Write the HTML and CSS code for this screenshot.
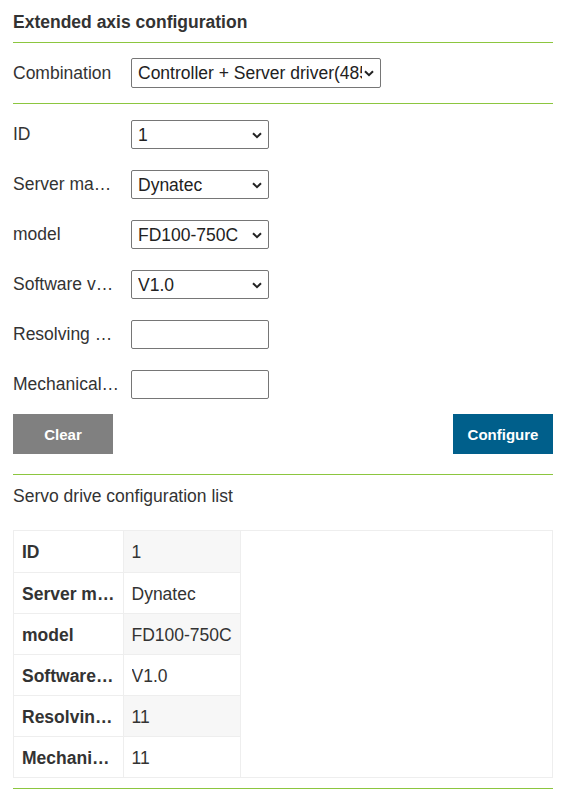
FILE: index.html
```html
<!DOCTYPE html>
<html>
<head>
<meta charset="utf-8">
<link rel="stylesheet" href="styles.css">
</head>
<body>
<div class="page">
  <div class="title">Extended axis configuration</div>
  <div class="combo">
    <span class="combo-label">Combination</span>
    <span class="sel-wrap sel-wrap-wide">
      <select class="sel sel-wide"><option>Controller + Server driver(485)</option></select>
      <svg class="chev" width="10" height="7" viewBox="0 0 10 7"><path d="M1 1.2 L5 5.2 L9 1.2" fill="none" stroke="#222" stroke-width="2"/></svg>
    </span>
  </div>
  <div class="form">
    <div class="row"><span class="lbl">ID</span>
      <span class="sel-wrap"><select class="sel"><option>1</option></select>
      <svg class="chev" width="10" height="7" viewBox="0 0 10 7"><path d="M1 1.2 L5 5.2 L9 1.2" fill="none" stroke="#222" stroke-width="2"/></svg></span></div>
    <div class="row"><span class="lbl">Server manufacturer</span>
      <span class="sel-wrap"><select class="sel"><option>Dynatec</option></select>
      <svg class="chev" width="10" height="7" viewBox="0 0 10 7"><path d="M1 1.2 L5 5.2 L9 1.2" fill="none" stroke="#222" stroke-width="2"/></svg></span></div>
    <div class="row"><span class="lbl">model</span>
      <span class="sel-wrap"><select class="sel"><option>FD100-750C</option></select>
      <svg class="chev" width="10" height="7" viewBox="0 0 10 7"><path d="M1 1.2 L5 5.2 L9 1.2" fill="none" stroke="#222" stroke-width="2"/></svg></span></div>
    <div class="row"><span class="lbl">Software version</span>
      <span class="sel-wrap"><select class="sel"><option>V1.0</option></select>
      <svg class="chev" width="10" height="7" viewBox="0 0 10 7"><path d="M1 1.2 L5 5.2 L9 1.2" fill="none" stroke="#222" stroke-width="2"/></svg></span></div>
    <div class="row"><span class="lbl">Resolving power</span><input class="inp" type="text"></div>
    <div class="row"><span class="lbl">Mechanical ratio</span><input class="inp" type="text"></div>
  </div>
  <div class="actions">
    <button class="btn btn-clear">Clear</button>
    <button class="btn btn-conf">Configure</button>
  </div>
  <div class="list-title">Servo drive configuration list</div>
  <div class="table-box">
    <table class="tbl">
      <tr><th><span class="cell">ID</span></th><td class="shade"><span class="cell">1</span></td></tr>
      <tr><th><span class="cell">Server manufacturer</span></th><td><span class="cell">Dynatec</span></td></tr>
      <tr><th><span class="cell">model</span></th><td class="shade"><span class="cell">FD100-750C</span></td></tr>
      <tr><th><span class="cell">Software version</span></th><td><span class="cell">V1.0</span></td></tr>
      <tr><th><span class="cell">Resolving power</span></th><td class="shade"><span class="cell">11</span></td></tr>
      <tr><th><span class="cell">Mechanical ratio</span></th><td><span class="cell">11</span></td></tr>
    </table>
  </div>
  <div class="end-line"></div>
</div>
</body>
</html>
```

FILE: styles.css
```css
html, body {
  margin: 0;
  padding: 0;
  background: #fff;
}
body {
  font-family: "Liberation Sans", Arial, sans-serif;
  font-size: 17.5px;
  color: #333;
}
.page {
  padding: 0 11px 0 13px;
}
.title {
  padding: 12px 0 10px;
  line-height: 20px;
  font-weight: bold;
  border-bottom: 1px solid #8cc63f;
}
.combo {
  display: flex;
  align-items: center;
  padding: 15px 0 15px;
  border-bottom: 1px solid #8cc63f;
}
.combo-label {
  width: 118px;
}
.sel-wrap {
  position: relative;
  display: inline-flex;
}
.chev {
  position: absolute;
  right: 7px;
  top: 50%;
  margin-top: -3px;
  pointer-events: none;
}
.sel, .inp {
  font-family: "Liberation Sans", Arial, sans-serif;
  font-size: 17.5px;
  color: #222;
  width: 138px;
  height: 29px;
  box-sizing: border-box;
  margin: 0;
  border: 1px solid #767676;
  border-radius: 2px;
  background: #fff;
}
.sel {
  -webkit-appearance: none;
  appearance: none;
  padding: 0 20px 0 6px;
}
.inp {
  padding: 0 6px;
}
.sel-wide {
  width: 250px;
  height: 30px;
  padding-right: 18px;
}
.form {
  display: flex;
  flex-direction: column;
  gap: 21px;
  padding-top: 16px;
}
.row {
  display: flex;
  align-items: center;
}
.lbl {
  width: 107px;
  margin-right: 11px;
  white-space: nowrap;
  overflow: hidden;
  text-overflow: ellipsis;
}
.actions {
  display: flex;
  justify-content: space-between;
  padding: 15px 0 20px;
  border-bottom: 1px solid #8cc63f;
}
.btn {
  width: 100px;
  height: 40px;
  border: none;
  color: #fff;
  font-family: "Liberation Sans", Arial, sans-serif;
  font-weight: bold;
  font-size: 15px;
  padding: 0;
}
.btn-clear {
  background: #808080;
}
.btn-conf {
  background: #005f8b;
}
.list-title {
  padding: 11px 0 0;
  line-height: 20px;
}
.table-box {
  margin-top: 24px;
  border: 1px solid #eee;
  height: 246px;
}
.tbl {
  border-collapse: collapse;
  table-layout: fixed;
  width: 226px;
}
.tbl th, .tbl td {
  height: 41px;
  box-sizing: border-box;
  border: 1px solid #eee;
  text-align: left;
  padding-top: 3px;
}
.cell {
  display: block;
  white-space: nowrap;
  overflow: hidden;
  text-overflow: ellipsis;
}
.tbl tr:first-child th, .tbl tr:first-child td {
  border-top: none;
}
.tbl th {
  width: 109px;
  padding-right: 6px;
  padding-left: 8px;
  padding-bottom: 0;
  border-left: none;
  font-weight: bold;
}
.tbl td {
  width: 117px;
  padding-right: 4px;
  padding-left: 8px;
  padding-bottom: 0;
}
.tbl td.shade {
  background: #f7f7f7;
}
.end-line {
  margin-top: 10px;
  border-bottom: 1px solid #8cc63f;
}
```
